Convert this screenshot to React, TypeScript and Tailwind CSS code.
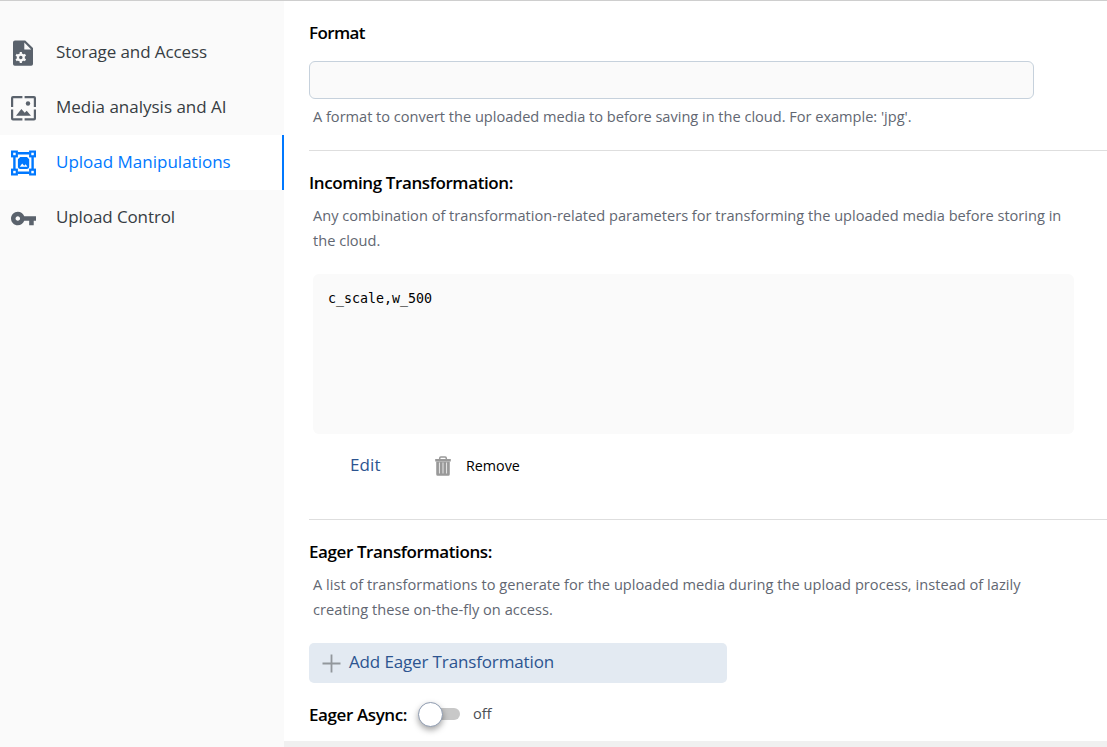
import type { ReactNode } from "react";

function FileCogIcon() {
  return (
    <svg width="25" height="27" viewBox="0 0 25 27" className="shrink-0">
      <path
        fill="currentColor"
        fillRule="evenodd"
        d="M4 0.5H14.2L22 8.1V24a1.8 1.8 0 0 1-1.8 1.8H3.8A1.8 1.8 0 0 1 2 24V2.5A2 2 0 0 1 4 0.5ZM13.3 2.6V9.4H20.2Z"
      />
      <g transform="translate(9.8 17.5)" className="text-[#fafafa]">
        <circle r="2.9" fill="none" stroke="currentColor" strokeWidth="2.3" />
        <path
          stroke="currentColor"
          strokeWidth="2.2"
          d="M0-5.4V-3M0 5.4V3M-4.7-2.7-2.7-1.5M4.7 2.7 2.7 1.5M-4.7 2.7-2.7 1.5M4.7-2.7 2.7-1.5"
        />
      </g>
    </svg>
  );
}

function FramedImageIcon() {
  return (
    <svg width="25" height="27" viewBox="0 0 25 27" className="shrink-0">
      <path
        fill="none"
        stroke="currentColor"
        strokeWidth="2.2"
        d="M11.4 2.1H2Q1.1 2.1 1.1 3V12M13.6 2.1H23Q23.9 2.1 23.9 3V12M11.4 24.4H2Q1.1 24.4 1.1 23.5V14.6M13.6 24.4H23Q23.9 24.4 23.9 23.5V14.6"
      />
      <circle cx="17" cy="8.5" r="2.2" fill="currentColor" />
      <path fill="currentColor" d="M5 20.7 10.4 14 13.7 17.8 15.7 15.7 20 20.7Z" />
    </svg>
  );
}

function TransformIcon() {
  return (
    <svg width="25" height="27" viewBox="0 0 25 27" className="shrink-0">
      <g fill="none" stroke="currentColor" strokeWidth="2.2">
        <path d="M6.5 3.2H18.5M6.5 22.8H18.5M3.4 6.5V19.5M21.6 6.5V19.5" strokeWidth="2.4" />
        <rect x="1.1" y="1.6" width="4.7" height="4.7" />
        <rect x="19.2" y="1.6" width="4.7" height="4.7" />
        <rect x="1.1" y="19.7" width="4.7" height="4.7" />
        <rect x="19.2" y="19.7" width="4.7" height="4.7" />
      </g>
      <path
        fill="currentColor"
        fillRule="evenodd"
        d="M9.2 7H16L18.2 9.2V16.8Q18.2 18.9 16.1 18.9H9Q6.9 18.9 6.9 16.8V9.2ZM8.8 16.7H16.4L14.7 14.2 13.2 15.7 11.2 13.4Z"
      />
    </svg>
  );
}

function KeyIcon() {
  return (
    <svg width="25" height="27" viewBox="1 0.12 22 23.76" className="shrink-0">
      <path
        fill="currentColor"
        d="M12.65 10C11.83 7.67 9.61 6 7 6c-3.31 0-6 2.69-6 6s2.69 6 6 6c2.61 0 4.83-1.67 5.65-4H17v4h4v-4h2v-4H12.65zM7 14c-1.1 0-2-.9-2-2s.9-2 2-2 2 .9 2 2-.9 2-2 2z"
      />
    </svg>
  );
}

function TrashIcon() {
  return (
    <svg width="16" height="20" viewBox="0 0 17 20" preserveAspectRatio="none" className="shrink-0 text-[#999]">
      <path fill="none" stroke="currentColor" strokeWidth="1.6" d="M5 3.5V2.2Q5 1 6.2 1H10.8Q12 1 12 2.2V3.5" />
      <path fill="currentColor" d="M0.2 3H16.8V5.5H0.2Z" />
      <path
        fill="currentColor"
        fillRule="evenodd"
        d="M1.3 5.5H15.7V18.2Q15.7 19.7 14.2 19.7H2.8Q1.3 19.7 1.3 18.2ZM4.2 6.5V17.6H5V6.5ZM8.1 6.5V17.6H8.9V6.5ZM12 6.5V17.6H12.8V6.5Z"
      />
    </svg>
  );
}

function NavItem({ icon, label, active, spacing = "" }: { icon: ReactNode; label: string; active?: boolean; spacing?: string }) {
  return (
    <a
      href="#"
      className={`flex h-[55px] items-center gap-5 border-r-2 pl-[11px] ${
        active ? "border-[#0078ff] bg-white text-[#0078ff]" : "border-transparent text-[#5a626c]"
      }`}
    >
      <span className="flex pt-[2px]">{icon}</span>
      <span className={`whitespace-nowrap pb-px text-[17px] leading-6 ${spacing} ${active ? "" : "text-[#373d43]"}`}>{label}</span>
    </a>
  );
}

function Heading({ children, className = "tracking-[-0.4px]" }: { children: ReactNode; className?: string }) {
  return <h2 className={`whitespace-nowrap text-[17px] leading-6 font-semibold text-black ${className}`}>{children}</h2>;
}

export default function App() {
  return (
    <div className="flex h-[747px] w-[1107px] flex-col overflow-hidden border-t border-[#cecece] bg-white font-['Open_Sans','Noto_Sans',sans-serif]">
      <div className="flex min-h-0 flex-1">
        <nav className="w-[284px] shrink-0 bg-[#fafafa] pt-6">
          <NavItem icon={<FileCogIcon />} label="Storage and Access" spacing="tracking-[-0.09px]" />
          <NavItem icon={<FramedImageIcon />} label="Media analysis and AI" />
          <NavItem icon={<TransformIcon />} label="Upload Manipulations" active />
          <NavItem icon={<KeyIcon />} label="Upload Control" spacing="tracking-[-0.1px]" />
        </nav>
        <div className="flex min-w-0 flex-1 flex-col">
          <main className="min-h-0 flex-1 overflow-hidden pl-[25px]">
            <section className="h-[149px] pt-5">
              <Heading className="tracking-[-0.6px]">Format</Heading>
              <input aria-label="Format" className="mt-4 block h-[38px] w-[725px] rounded-[6px] border border-[#c6d1dc] bg-[#fafafa] px-3 outline-none" />
              <p className="mt-[5px] pl-1 text-[14.6px] leading-[25px] tracking-[-0.02px] text-[#626772]">
                A format to convert the uploaded media to before saving in the cloud. For example: 'jpg'.
              </p>
            </section>
            <section className="h-[369px] border-t border-[#dedede] pt-5">
              <Heading>Incoming Transformation:</Heading>
              <p className="mt-2 pl-1 text-[14.6px] leading-[25px] text-[#626772]">
                Any combination of transformation-related parameters for transforming the uploaded media before storing in
                <br />
                the cloud.
              </p>
              <pre className="mt-[21px] ml-1 h-40 w-[761px] rounded-[6px] bg-[#fafafa] px-[15px] py-[15px] font-['DejaVu_Sans_Mono',monospace] text-[13.3px] leading-5 text-black">
                c_scale,w_500
              </pre>
              <div className="mt-[19px] flex h-[26px] items-center pl-[41px]">
                <a href="#" className="w-[85px] pb-0.5 text-[17px] leading-6 tracking-[0.1px] text-[#2c5490]">
                  Edit
                </a>
                <button className="flex items-center gap-[15px] text-[14.3px] leading-6 text-black">
                  <TrashIcon />
                  Remove
                </button>
              </div>
            </section>
            <section className="border-t border-[#dedede] pt-5">
              <Heading>Eager Transformations:</Heading>
              <p className="mt-2 pl-1 text-[14.6px] leading-[25px] tracking-[0.03px] text-[#626772]">
                A list of transformations to generate for the uploaded media during the upload process, instead of lazily
                <br />
                creating these on-the-fly on access.
              </p>
              <button className="mt-[21px] flex h-10 w-[418px] items-center gap-2 rounded-[5px] bg-[#e3eaf2] pl-[13px] text-[17px] leading-6 tracking-[-0.14px] text-[#2c5490]">
                <svg width="19" height="19" viewBox="0 0 19 19" className="shrink-0">
                  <path d="M9.5 0.5V18.5M0.5 9.5H18.5" stroke="#92979c" strokeWidth="1.8" />
                </svg>
                <span className="pb-0.5">Add Eager Transformation</span>
              </button>
              <div className="mt-[17px] flex h-7 items-center">
                <Heading className="w-[109px] pt-0.5 tracking-[-0.4px]">Eager Async:</Heading>
                <button role="switch" aria-checked="false" aria-label="Eager Async" className="flex h-[26px] w-[42px] items-center">
                  <span className="z-10 size-[25px] shrink-0 rounded-full border border-[#8e9bb0] bg-white shadow-[0_3px_6px_rgba(0,0,0,0.36)]" />
                  <span className="-ml-2 h-3 w-[25px] rounded-r-full bg-[#c8c8c8]" />
                </button>
                <span className="ml-[13px] pb-0.5 text-[14.6px] leading-6 text-[#4b4f55]">off</span>
              </div>
            </section>
          </main>
          <footer className="h-1.5 shrink-0 bg-[#f0f0f0]" />
        </div>
      </div>
    </div>
  );
}
